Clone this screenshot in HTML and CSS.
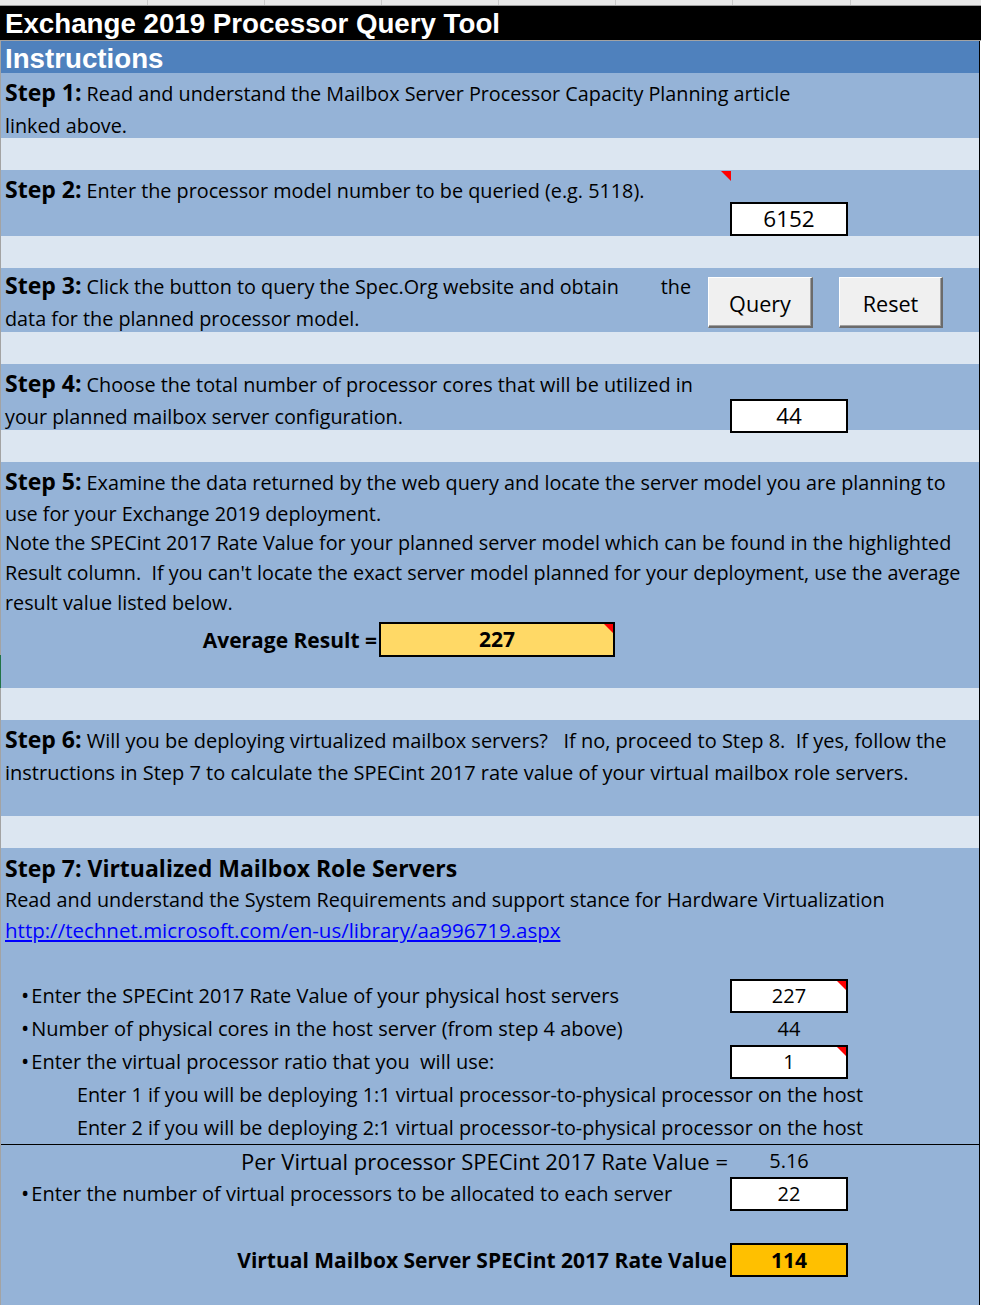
FILE: index.html
```html
<!DOCTYPE html>
<html lang="en">
<head>
<meta charset="utf-8">
<title>Exchange 2019 Processor Query Tool</title>
<link rel="stylesheet" href="styles.css">
</head>
<body>
<div class="sheet">
  <div class="colbar">
    <span class="col c1"></span><span class="col"></span><span class="col"></span><span class="col"></span><span class="col"></span><span class="col"></span><span class="col c7"></span><span class="col last"></span>
  </div>
  <div class="title">Exchange 2019 Processor Query Tool</div>
  <div class="main">
    <div class="instr">Instructions</div>

    <section class="band step1">
      <div class="ln"><span class="lbl">Step 1:</span> Read and understand the Mailbox Server Processor Capacity Planning article</div>
      <div class="ln">linked above.</div>
    </section>
    <div class="gap"></div>

    <section class="band step2 grid">
      <div class="ln"><span class="lbl">Step 2:</span> Enter the processor model number to be queried (e.g. 5118).</div>
      <div class="vbox big end">6152</div>
      <span class="marker m-step2"></span>
    </section>
    <div class="gap"></div>

    <section class="band step3">
      <div class="s3text">
        <div class="ln split"><span><span class="lbl">Step 3:</span> Click the button to query the Spec.Org website and obtain</span><span>the</span></div>
        <div class="ln">data for the planned processor model.</div>
      </div>
      <div class="btn btn-query">Query</div>
      <div class="btn btn-reset">Reset</div>
    </section>
    <div class="gap"></div>

    <section class="band step4 grid">
      <div>
        <div class="ln"><span class="lbl">Step 4:</span> Choose the total number of processor cores that will be utilized in</div>
        <div class="ln">your planned mailbox server configuration.</div>
      </div>
      <div class="vbox big end">44</div>
    </section>
    <div class="gap"></div>

    <section class="band step5">
      <div class="ln"><span class="lbl">Step 5:</span> Examine the data returned by the web query and locate the server model you are planning to</div>
      <div class="ln h29">use for your Exchange 2019 deployment.</div>
      <div class="ln h30">Note the SPECint 2017 Rate Value for your planned server model which can be found in the highlighted</div>
      <div class="ln h30">Result column.&nbsp; If you can't locate the exact server model planned for your deployment, use the average</div>
      <div class="ln h30">result value listed below.</div>
      <div class="avgrow">
        <div class="avglabel">Average Result =</div>
        <div class="vbox avgbox flag">227</div>
      </div>
    </section>
    <div class="gap"></div>

    <section class="band step6">
      <div class="ln"><span class="lbl">Step 6:</span> Will you be deploying virtualized mailbox servers?&nbsp;&nbsp; If no, proceed to Step 8.&nbsp; If yes, follow the</div>
      <div class="ln">instructions in Step 7 to calculate the SPECint 2017 rate value of your virtual mailbox role servers.</div>
    </section>
    <div class="gap"></div>

    <section class="band step7">
      <div class="ln heading">Step 7: Virtualized Mailbox Role Servers</div>
      <div class="ln">Read and understand the System Requirements and support stance for Hardware Virtualization</div>
      <div class="ln h28"><a class="link" href="#">http://technet.microsoft.com/en-us/library/aa996719.aspx</a></div>

      <div class="rows">
        <div class="row">
          <div class="rt bullet"><span class="dot">•</span>Enter the SPECint 2017 Rate Value of your physical host servers</div>
          <div class="vbox flag">227</div>
        </div>
        <div class="row">
          <div class="rt bullet"><span class="dot">•</span>Number of physical cores in the host server (from step 4 above)</div>
          <div class="plain">44</div>
        </div>
        <div class="row">
          <div class="rt bullet"><span class="dot">•</span>Enter the virtual processor ratio that you&nbsp; will use:</div>
          <div class="vbox flag">1</div>
        </div>
        <div class="row">
          <div class="rt indent">Enter 1 if you will be deploying 1:1 virtual processor-to-physical processor on the host</div>
        </div>
        <div class="row">
          <div class="rt indent">Enter 2 if you will be deploying 2:1 virtual processor-to-physical processor on the host</div>
        </div>
      </div>
      <div class="rule"></div>
      <div class="row row32">
        <div class="rt right wide">Per Virtual processor SPECint 2017 Rate Value =</div>
        <div class="plain">5.16</div>
      </div>
      <div class="row row34">
        <div class="rt bullet"><span class="dot">•</span>Enter the number of virtual processors to be allocated to each server</div>
        <div class="vbox">22</div>
      </div>
      <div class="row row34 final">
        <div class="rt right strong">Virtual Mailbox Server SPECint 2017 Rate Value</div>
        <div class="vbox total">114</div>
      </div>
    </section>
  </div>
</div>
</body>
</html>
```

FILE: styles.css
```css
* { box-sizing: border-box; }

html, body {
  margin: 0;
  padding: 0;
  background: #ffffff;
}

body {
  font-family: "Open Sans", "Noto Sans", sans-serif;
  font-size: 19.8px;
  color: #000000;
}

.sheet {
  width: 981px;
}

/* spreadsheet column strip */
.colbar {
  display: flex;
  height: 6px;
  background: #e8e8e8;
  border-bottom: 1px solid #9e9e9e;
}
.col {
  flex: none;
  width: 117px;
  height: 5px;
  border-right: 1px solid #cacaca;
}
.col.c1 { width: 148px; }
.col.c7 { width: 118px; }
.col.last { flex: 1; border-right: none; }

.title {
  height: 35px;
  background: #000000;
  color: #ffffff;
  font-family: "Liberation Sans", Arial, sans-serif;
  font-weight: 700;
  font-size: 27.7px;
  line-height: 35px;
  padding-left: 5px;
  border-bottom: 1px solid #a3a3a3;
  white-space: nowrap;
}

.main {
  width: 980px;
  border-left: 1px solid #a3a3a3;
  border-right: 1px solid #000000;
}

.instr {
  height: 32px;
  background: #4f81bd;
  color: #ffffff;
  font-family: "Liberation Sans", Arial, sans-serif;
  font-weight: 700;
  font-size: 27.7px;
  line-height: 35px;
  padding-left: 4px;
  white-space: nowrap;
  overflow: hidden;
}

.band {
  background: #95b3d7;
  position: relative;
}

.gap {
  height: 32px;
  background: #dce6f1;
}

.ln {
  height: 32px;
  line-height: 32px;
  padding-left: 4px;
  white-space: nowrap;
}
.ln.h29 { height: 29px; line-height: 29px; }
.ln.h30 { height: 30px; line-height: 30px; }
.ln.h28 { height: 28px; line-height: 28px; }

.lbl {
  font-weight: 700;
  font-size: 23px;
  line-height: 1;
}

.grid {
  display: grid;
  grid-template-columns: 729px 118px;
}

.vbox {
  width: 118px;
  height: 34px;
  border: 2px solid #000000;
  background: #ffffff;
  text-align: center;
  line-height: 30px;
  position: relative;
}
.vbox.end { align-self: end; }
.vbox.big { font-size: 22.5px; }

.flag::after {
  content: "";
  position: absolute;
  top: 0;
  right: 0;
  width: 0;
  height: 0;
  border-top: 9px solid #ff0000;
  border-left: 9px solid transparent;
}

.marker {
  position: absolute;
  left: 720px;
  top: 1px;
  width: 0;
  height: 0;
  border-top: 10px solid #ff0000;
  border-left: 10px solid transparent;
}

/* step rows */
.step1 { height: 65px; padding-top: 5px; }
.step2 { height: 66px; padding-top: 5px; }
.step4 { height: 66px; padding-top: 5px; }

.step3 {
  height: 64px;
  padding-top: 3px;
  display: flex;
  align-items: flex-start;
}
.s3text { width: 690px; flex: none; }
.split {
  display: flex;
  justify-content: space-between;
}

.btn {
  flex: none;
  height: 51px;
  margin-top: 6px;
  background: #f0f0f0;
  border-style: solid;
  border-width: 1px 2px 2px 1px;
  border-color: #ffffff #6b6b6b #6b6b6b #ffffff;
  box-shadow: inset -1px -1px 0 #a0a0a0;
  display: flex;
  align-items: center;
  justify-content: center;
  font-size: 21.6px;
  padding-top: 2px;
}
.btn-query { width: 105px; margin-left: 17px; }
.btn-reset { width: 104px; margin-left: 26px; }

.step5 { height: 226px; padding-top: 5px; }
.step5::before {
  content: "";
  position: absolute;
  left: -1px;
  bottom: 0;
  width: 1px;
  height: 33px;
  background: #217346;
}

.avgrow {
  display: grid;
  grid-template-columns: 376px 236px;
  column-gap: 2px;
  margin-top: 4px;
  height: 35px;
  align-items: center;
}
.avglabel {
  text-align: right;
  font-weight: 700;
  font-size: 21px;
  white-space: nowrap;
}
.avgbox {
  width: 236px;
  height: 35px;
  line-height: 31px;
  background: #ffd966;
  font-weight: 700;
  font-size: 21px;
}

.step6 { height: 96px; padding-top: 5px; font-size: 20px; }

.step7 {
  height: 457px;
  padding-top: 4px;
}
.heading {
  font-weight: 700;
  font-size: 23px;
}
.link {
  color: #0000ff;
  text-decoration: underline;
  font-size: 20.5px;
}

.rows { margin-top: 35px; }

.row {
  display: grid;
  grid-template-columns: 729px 118px;
  height: 33px;
  align-items: center;
  font-size: 20px;
}
.row32 { height: 32px; }
.row34 { height: 34px; }
.final { margin-top: 32px; }

.rt {
  white-space: nowrap;
  line-height: 32px;
}
.bullet { padding-left: 20px; }
.dot {
  font-size: 22px;
  line-height: 1;
  margin-right: 2px;
}
.indent { padding-left: 76px; font-size: 19.8px; }
.right { text-align: right; padding-right: 2px; }
.wide { font-size: 22px; }
.strong { font-weight: 700; font-size: 21px; padding-right: 3px; }

.plain {
  text-align: center;
  line-height: 32px;
}

.total {
  background: #ffc000;
  font-weight: 700;
  font-size: 21px;
}

.rule {
  height: 1px;
  background: #000000;
}
```
